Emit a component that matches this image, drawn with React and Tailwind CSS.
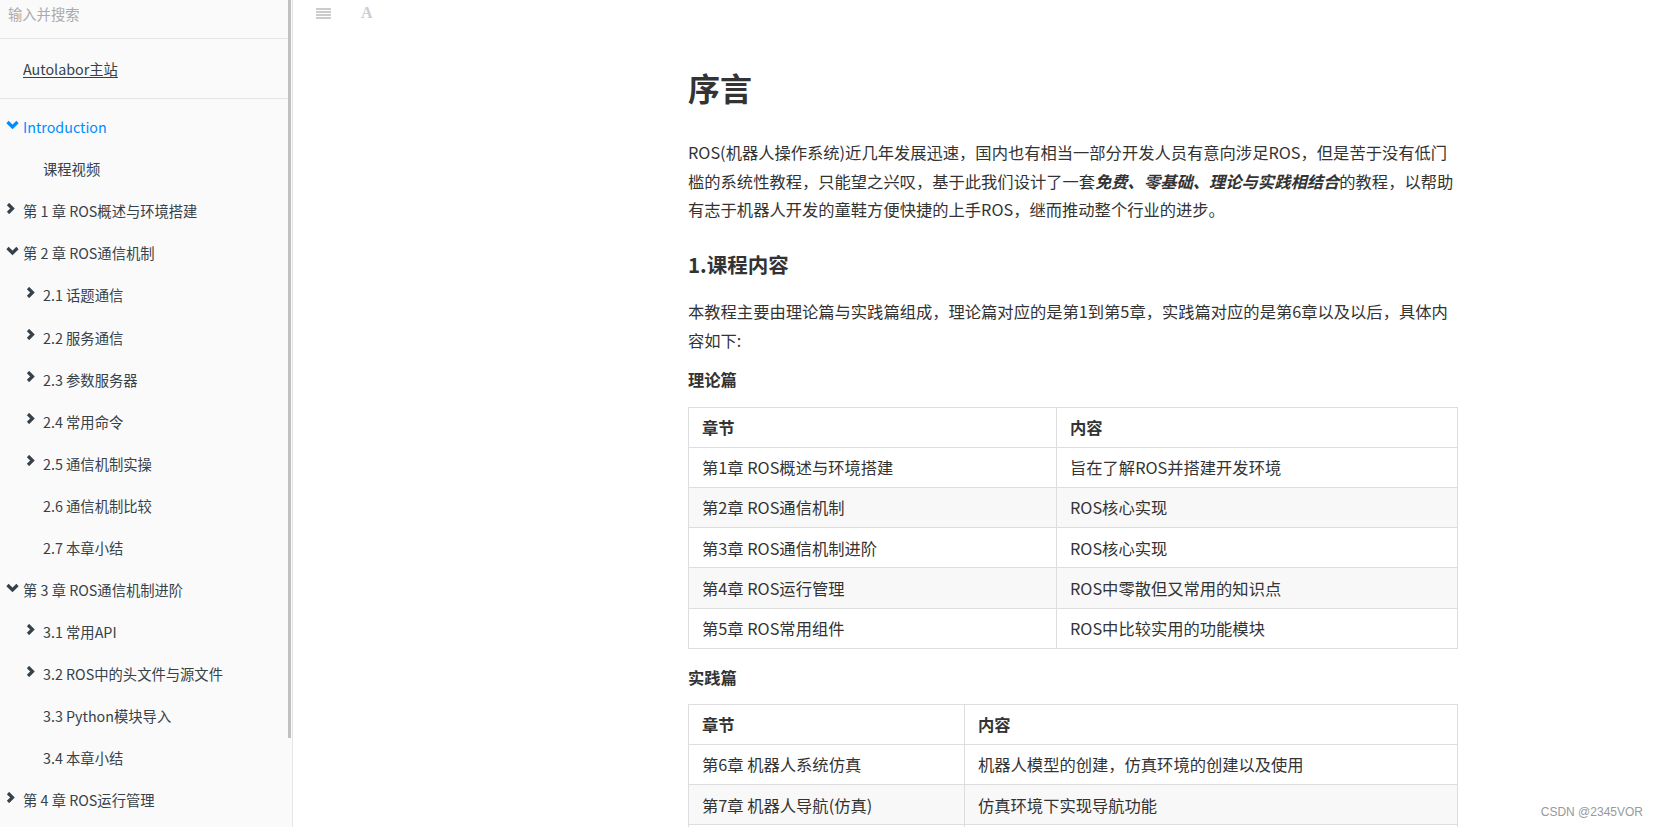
import React from "react";

const nav = [
  { label: "Introduction", level: 1, icon: "down", active: true },
  { label: "课程视频", level: 2 },
  { label: "第 1 章 ROS概述与环境搭建", level: 1, icon: "right" },
  { label: "第 2 章 ROS通信机制", level: 1, icon: "down" },
  { label: "2.1 话题通信", level: 2, icon: "right" },
  { label: "2.2 服务通信", level: 2, icon: "right" },
  { label: "2.3 参数服务器", level: 2, icon: "right" },
  { label: "2.4 常用命令", level: 2, icon: "right" },
  { label: "2.5 通信机制实操", level: 2, icon: "right" },
  { label: "2.6 通信机制比较", level: 2 },
  { label: "2.7 本章小结", level: 2 },
  { label: "第 3 章 ROS通信机制进阶", level: 1, icon: "down" },
  { label: "3.1 常用API", level: 2, icon: "right" },
  { label: "3.2 ROS中的头文件与源文件", level: 2, icon: "right" },
  { label: "3.3 Python模块导入", level: 2 },
  { label: "3.4 本章小结", level: 2 },
  { label: "第 4 章 ROS运行管理", level: 1, icon: "right" },
];

const theory = [
  ["第1章 ROS概述与环境搭建", "旨在了解ROS并搭建开发环境"],
  ["第2章 ROS通信机制", "ROS核心实现"],
  ["第3章 ROS通信机制进阶", "ROS核心实现"],
  ["第4章 ROS运行管理", "ROS中零散但又常用的知识点"],
  ["第5章 ROS常用组件", "ROS中比较实用的功能模块"],
];

// last row is only cut in at the bottom edge
const practice = [
  ["第6章 机器人系统仿真", "机器人模型的创建，仿真环境的创建以及使用"],
  ["第7章 机器人导航(仿真)", "仿真环境下实现导航功能"],
  ["\u00a0", "\u00a0"],
];

const Chevron = ({ dir, color }) =>
  dir === "down" ? (
    <svg width="13" height="10" viewBox="0 0 13 10" className="mt-[-4px]">
      <polyline points="1.5,2 6.5,7 11.5,2" fill="none" stroke={color} strokeWidth="3.2" />
    </svg>
  ) : (
    <svg width="9" height="11" viewBox="0 0 9 11" className="mt-[-5px]">
      <polyline points="2,1 6.5,5.5 2,10" fill="none" stroke={color} strokeWidth="3.2" />
    </svg>
  );

const Table = ({ rows, col }) => (
  <table className="w-full border-collapse text-[16.3px]">
    <thead>
      <tr className="h-[40.2px]">
        <th className={`border border-[#ddd] px-[13px] text-left font-bold ${col}`}>章节</th>
        <th className="border border-[#ddd] px-[13px] text-left font-bold">内容</th>
      </tr>
    </thead>
    <tbody>
      {rows.map((r, i) => (
        <tr key={i} className={`h-[40.2px] ${i % 2 === 1 ? "bg-[#f8f8f8]" : "bg-white"}`}>
          <td className="border border-[#ddd] px-[13px]">{r[0]}</td>
          <td className="border border-[#ddd] px-[13px]">{r[1]}</td>
        </tr>
      ))}
    </tbody>
  </table>
);

export default function App() {
  return (
    <div
      className="relative flex h-[827px] w-[1658px] overflow-hidden bg-white text-[#333]"
      style={{ fontFamily: '"Noto Sans CJK SC", "Noto Sans", sans-serif' }}
    >
      {/* sidebar */}
      <div className="flex shrink-0 border-r border-[#e6e6e6] bg-[#fafafa]">
        <div className="w-[288px] text-[14.3px] text-[#364149]">
          <div className="h-[39px] border-b border-[#e5e5e5] pl-[8px] pt-[3px] leading-[22px] text-[#aaa]">
            输入并搜索
          </div>
          <div className="flex h-[60px] items-center border-b border-[#e5e5e5] pl-[23px]">
            <span className="underline underline-offset-2">Autolabor主站</span>
          </div>
          <div className="pt-[7px]">
            {nav.map((n, i) => {
              const color = n.active ? "#008cff" : "#364149";
              return (
                <div
                  key={i}
                  className={`flex h-[42.05px] items-center ${n.level === 1 ? "pl-[6px]" : "pl-[26px]"}`}
                  style={{ color }}
                >
                  <span className="flex w-[17px] shrink-0 items-center">
                    {n.icon && <Chevron dir={n.icon} color={color} />}
                  </span>
                  <span className="whitespace-nowrap">{n.label}</span>
                </div>
              );
            })}
          </div>
        </div>
        <div className="w-[4px]">
          <div className="h-[738px] w-[3px] bg-[#c1c1c1]" />
        </div>
      </div>

      {/* main */}
      <div className="flex-1">
        <div className="flex h-[30px] items-start gap-[30px] pl-[23px] pt-[8px] text-[#cccccc]">
          <svg width="15" height="11" viewBox="0 0 15 11">
            <rect x="0" y="0" width="15" height="2" fill="#cccccc" />
            <rect x="0" y="3" width="15" height="2" fill="#cccccc" />
            <rect x="0" y="6" width="15" height="2" fill="#cccccc" />
            <rect x="0" y="9" width="15" height="2" fill="#cccccc" />
          </svg>
          <span
            className="mt-[-3px] text-[16px] font-bold leading-[16px]"
            style={{ fontFamily: '"Liberation Serif", serif' }}
          >
            A
          </span>
        </div>

        <div className="ml-[395px] w-[770px]">
          <h1 className="mt-[37px] text-[32px] font-bold leading-[40px]">序言</h1>
          <p className="mt-[31px] text-[16.3px] leading-[28.6px]">
            ROS(机器人操作系统)近几年发展迅速，国内也有相当一部分开发人员有意向涉足ROS，但是苦于没有低门槛的系统性教程，只能望之兴叹，基于此我们设计了一套
            <b>
              <i>免费、零基础、理论与实践相结合</i>
            </b>
            的教程，以帮助有志于机器人开发的童鞋方便快捷的上手ROS，继而推动整个行业的进步。
          </p>
          <h2 className="mt-[25px] text-[20.5px] font-bold leading-[30px]">1.课程内容</h2>
          <p className="mt-[18.7px] text-[16.3px] leading-[28.6px]">
            本教程主要由理论篇与实践篇组成，理论篇对应的是第1到第5章，实践篇对应的是第6章以及以后，具体内容如下:
          </p>
          <p className="mt-[10.8px] text-[16.3px] font-bold leading-[28.6px]">理论篇</p>
          <div className="mt-[12.7px]">
            <Table rows={theory} col="w-[368px]" />
          </div>
          <p className="mt-[13.7px] text-[16.3px] font-bold leading-[28.6px]">实践篇</p>
          <div className="mt-[12.7px]">
            <Table rows={practice} col="w-[276px]" />
          </div>
        </div>
      </div>

      <div
        className="absolute bottom-[6px] right-[15px] text-[12px] text-[#999]"
        style={{ fontFamily: '"Liberation Sans", Arial, sans-serif' }}
      >
        CSDN @2345VOR
      </div>
    </div>
  );
}
